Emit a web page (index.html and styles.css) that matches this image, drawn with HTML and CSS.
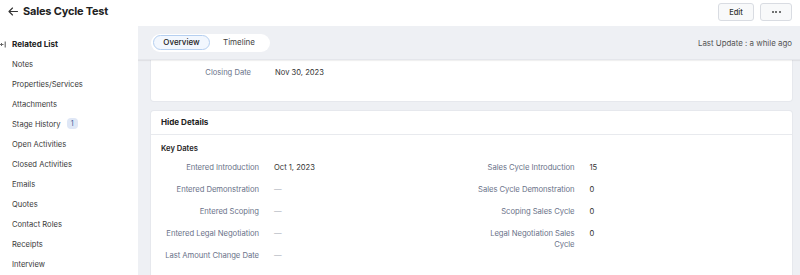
FILE: index.html
```html
<!DOCTYPE html>
<html>
<head>
<meta charset="utf-8">
<link rel="stylesheet" href="styles.css">
</head>
<body>
<div class="app">
  <header class="topbar">
    <div class="title-wrap">
      <svg class="back" width="10" height="9" viewBox="0 0 10 9"><path d="M9.5 4.5H1M4.5 1L1 4.5L4.5 8" fill="none" stroke="#333" stroke-width="1.1" stroke-linecap="round" stroke-linejoin="round"/></svg>
      <h1 class="title">Sales Cycle Test</h1>
    </div>
    <div class="actions">
      <button class="btn btn-edit">Edit</button>
      <button class="btn btn-more"><span class="dot"></span><span class="dot"></span><span class="dot"></span></button>
    </div>
  </header>
  <div class="layout">
    <aside class="sidebar">
      <div class="rl-head">
        <svg class="collapse" width="6" height="7" viewBox="0 0 6 7"><path d="M3.5 3.5H0.5M2 2L0.5 3.5L2 5" fill="none" stroke="#555" stroke-width="0.9"/><path d="M5.2 0.5V6.5" stroke="#555" stroke-width="1"/></svg>
        <span>Related List</span>
      </div>
      <ul class="rl">
        <li>Notes</li>
        <li>Properties/Services</li>
        <li>Attachments</li>
        <li>Stage History <span class="badge">1</span></li>
        <li>Open Activities</li>
        <li>Closed Activities</li>
        <li>Emails</li>
        <li>Quotes</li>
        <li>Contact Roles</li>
        <li>Receipts</li>
        <li>Interview</li>
      </ul>
    </aside>
    <main class="main">
      <div class="subbar">
        <div class="tabs">
          <span class="tab tab-active">Overview</span>
          <span class="tab">Timeline</span>
        </div>
        <div class="last-update">Last Update : a while ago</div>
      </div>
      <div class="content">
        <section class="card card-cut">
          <div class="field">
            <span class="label">Closing Date</span>
            <span class="value">Nov 30, 2023</span>
          </div>
        </section>
        <section class="card card-details">
          <div class="card-head">Hide Details</div>
          <div class="card-body">
            <div class="sec-title">Key Dates</div>
            <div class="cols">
              <div class="col">
                <div class="row"><span class="label">Entered Introduction</span><span class="value">Oct 1, 2023</span></div>
                <div class="row"><span class="label">Entered Demonstration</span><span class="value empty">—</span></div>
                <div class="row"><span class="label">Entered Scoping</span><span class="value empty">—</span></div>
                <div class="row"><span class="label">Entered Legal Negotiation</span><span class="value empty">—</span></div>
                <div class="row"><span class="label">Last Amount Change Date</span><span class="value empty">—</span></div>
              </div>
              <div class="col">
                <div class="row"><span class="label">Sales Cycle Introduction</span><span class="value">15</span></div>
                <div class="row"><span class="label">Sales Cycle Demonstration</span><span class="value">0</span></div>
                <div class="row"><span class="label">Scoping Sales Cycle</span><span class="value">0</span></div>
                <div class="row"><span class="label">Legal Negotiation Sales Cycle</span><span class="value">0</span></div>
              </div>
            </div>
          </div>
        </section>
      </div>
    </main>
  </div>
</div>
</body>
</html>
```
FILE: styles.css
```css
html, body {
  margin: 0;
  padding: 0;
  height: 275px;
  overflow: hidden;
}
body {
  font-family: Inter, "Noto Sans", sans-serif;
  font-size: 7.6px;
  color: #333;
  background: #fff;
}
.app {
  display: flex;
  flex-direction: column;
  height: 275px;
}
.topbar {
  height: 26px;
  flex: none;
  box-sizing: border-box;
  display: flex;
  align-items: flex-start;
  justify-content: space-between;
  padding: 3px 8px 0 8px;
  background: #fff;
}
.title-wrap {
  display: flex;
  align-items: center;
  gap: 5px;
  height: 17px;
}
.back {
  display: block;
}
.title {
  margin: 0;
  font-size: 11px;
  letter-spacing: -0.2px;
  font-weight: 700;
  color: #222;
  line-height: 17px;
}
.actions {
  display: flex;
  gap: 6px;
}
.btn {
  height: 18px;
  box-sizing: border-box;
  border: 1px solid #d9dce2;
  background: #f8f9fa;
  border-radius: 3px;
  font-family: inherit;
  font-size: 7.5px;
  font-weight: 500;
  color: #333;
  padding: 0;
  display: flex;
  align-items: center;
  justify-content: center;
}
.btn-edit {
  width: 36px;
}
.btn-more {
  width: 32px;
  gap: 1.5px;
}
.dot {
  width: 2px;
  height: 2px;
  border-radius: 50%;
  background: #444;
}
.layout {
  flex: 1;
  display: flex;
  min-height: 0;
}
.sidebar {
  width: 138px;
  flex: none;
  background: #fff;
}
.rl-head {
  display: flex;
  align-items: center;
  gap: 6px;
  padding: 10px 0 0 0;
  height: 16px;
  font-weight: 700;
  font-size: 8.1px;
  color: #222;
}
.collapse {
  display: block;
}
.rl {
  list-style: none;
  margin: 3px 0 0 0;
  padding: 0 0 0 12px;
}
.rl li {
  height: 20px;
  line-height: 20px;
  color: #3a3a3a;
}
.badge {
  display: inline-block;
  background: #dfe7f6;
  color: #3d5a96;
  border-radius: 4px;
  font-size: 7px;
  line-height: 11px;
  padding: 0 4px;
  margin-left: 4px;
  vertical-align: 1px;
}
.main {
  flex: 1;
  background: #eef0f4;
  display: flex;
  flex-direction: column;
  overflow: hidden;
  min-width: 0;
}
.subbar {
  height: 34px;
  flex: none;
  display: flex;
  align-items: center;
  justify-content: space-between;
  padding: 0 8px 0 13px;
  box-shadow: 0 1px 1px rgba(0, 0, 0, 0.06);
  border-bottom: 1px solid #e4e6eb;
  box-sizing: border-box;
  position: relative;
  z-index: 1;
}
.tabs {
  display: flex;
  align-items: center;
  background: #fff;
  border-radius: 10px;
  height: 18px;
  box-sizing: border-box;
  padding: 0 2px;
  width: 119px;
}
.tab {
  height: 15px;
  line-height: 13px;
  box-sizing: border-box;
  border: 1px solid transparent;
  border-radius: 8px;
  font-size: 8px;
  color: #444;
  text-align: center;
}
.tab-active {
  width: 57px;
  border-color: #b5cff0;
  background: #f2f7fe;
  color: #222;
  font-weight: 500;
}
.tab:not(.tab-active) {
  width: 58px;
}
.last-update {
  font-size: 7.9px;
  color: #555;
}
.content {
  padding: 0 8px 0 13px;
  flex: 1;
}
.card {
  background: #fff;
  border-radius: 3px;
  box-shadow: 0 0 0 1px #e6e8ed;
}
.card-cut {
  border-radius: 0 0 3px 3px;
  height: 41px;
}
.field {
  display: flex;
  padding-top: 7px;
  line-height: 12px;
}
.field .label {
  width: 100px;
  text-align: right;
  flex: none;
}
.field .value {
  margin-left: 24px;
}
.label {
  color: #6a7289;
}
.value {
  color: #333;
}
.value.empty {
  color: #b0b4bd;
}
.card-details {
  margin-top: 10px;
  height: 200px;
}
.card-head {
  height: 23px;
  line-height: 23px;
  padding-left: 10px;
  font-weight: 700;
  font-size: 8.1px;
  color: #222;
  border-bottom: 1px solid #e8eaee;
}
.card-body {
  padding: 0 16px 0 10px;
}
.sec-title {
  margin-top: 8px;
  line-height: 12px;
  font-weight: 600;
  color: #222;
}
.cols {
  display: grid;
  grid-template-columns: 1fr 1fr;
  column-gap: 16px;
  padding-top: 1px;
}
.row {
  display: grid;
  grid-template-columns: 98px 1fr;
  column-gap: 15px;
  padding: 5.5px 0;
  line-height: 11px;
}
.row .label {
  text-align: right;
  font-size: 7.7px;
  letter-spacing: -0.05px;
}
```
